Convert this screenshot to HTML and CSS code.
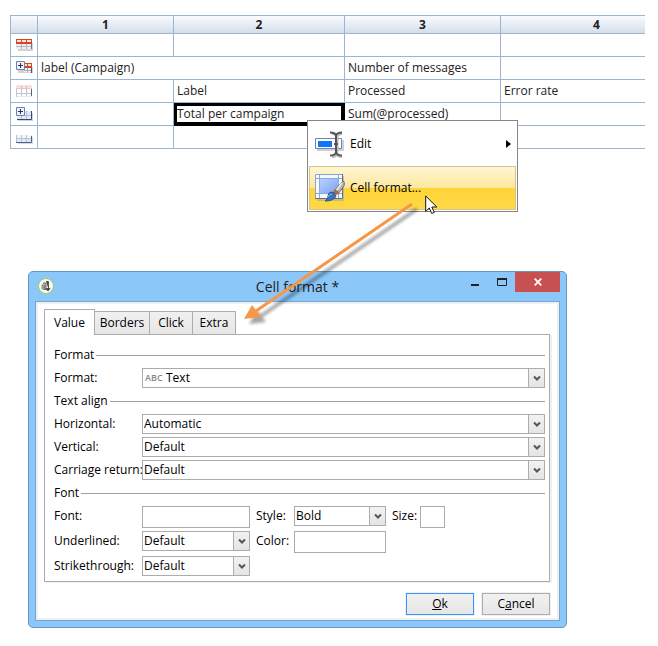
FILE: index.html
```html
<!DOCTYPE html>
<html lang="en">
<head>
<meta charset="utf-8">
<title>Cell format</title>
<link rel="stylesheet" href="styles.css">
</head>
<body>
<main class="page">
  <div class="sheet">
    <table class="grid">
      <colgroup><col class="c0"><col class="c1"><col class="c2"><col class="c3"><col></colgroup>
      <thead>
        <tr><th></th><th>1</th><th>2</th><th>3</th><th>4</th></tr>
      </thead>
      <tbody>
        <tr>
          <td class="mark"><svg width="18" height="12" viewBox="0 0 18 12"><path d="M2 4h15v8H2z" fill="#d2d3d8"/><path d="M0 5h16v5H0z" fill="#eeeef2"/><path d="M5.500 5v5M10.500 5v5M0 7.500h16" stroke="#b4b6c2" fill="none"/><path d="M15.500 5v5" stroke="#70768c"/><path d="M0 0h16v5H0z" fill="#d8451c"/><path d="M1 1h4v2H1zM6 1h4v2H6zM11 1h4v2h-4z" fill="#fde9e2"/></svg></td>
          <td></td><td></td><td></td><td></td>
        </tr>
        <tr>
          <td class="mark"><svg width="18" height="14" viewBox="0 0 18 14"><path d="M2 6h15v6H2z" fill="#d0d2d8"/><path d="M8 6h8v5H8z" fill="#f0f0f4"/><path d="M8 2h8v5H8z" fill="#d8451c"/><path d="M9 3h2v2H9zM12 3h3v2h-3z" fill="#fde9e2"/><path d="M11.500 7v4M8 9.500h8" stroke="#a9acb8"/><path d="M15.500 7v5" stroke="#46506e"/><path d="M.5 .5h8v8h-8z" fill="#eef2fa" stroke="#75819c"/><path d="M4.500 2v5M2 4.500h5" stroke="#223466"/></svg></td>
          <td colspan="2">label (Campaign)</td><td>Number of messages</td><td></td>
        </tr>
        <tr>
          <td class="mark"><svg width="18" height="13" viewBox="0 0 18 13"><path d="M0 0h16v3H0z" fill="#fbe3dc"/><path d="M0 3.500h16" stroke="#f0c5b9"/><path d="M5.500 1v11M10.500 1v11M0 8.500h16M.5 4v8" stroke="#c0c5d4"/><path d="M15.500 4v7" stroke="#53617f"/><path d="M1 11.500h15" stroke="#e6e9f0"/></svg></td>
          <td></td><td>Label</td><td>Processed</td><td>Error rate</td>
        </tr>
        <tr>
          <td class="mark"><svg width="18" height="14" viewBox="0 0 18 14"><path d="M2 6h15v8H2z" fill="#cfd3dc"/><path d="M1 4h15v8H1z" fill="#e1eafb"/><path d="M1 12.500h14.500V4" stroke="#35496f" fill="none"/><path d="M10.500 4v8M5.500 8v4M8 8.500h7" stroke="#b4bdd2"/><path d="M.5 .5h8v8h-8z" fill="#eef2fa" stroke="#75819c"/><path d="M4.500 2v5M2 4.500h5" stroke="#223466"/></svg></td>
          <td></td><td class="selected">Total per campaign</td><td>Sum(@processed)</td><td></td>
        </tr>
        <tr>
          <td class="mark"><svg width="18" height="16" viewBox="0 0 18 16"><path d="M2 8h15v7H2z" fill="#d8dae0"/><path d="M0 6h16v4H0z" fill="#f4f5f8"/><path d="M0 10h16v3H0z" fill="#dce7fa"/><path d="M5.500 6v7M10.500 6v7M0 9.500h16M.5 6v7" stroke="#bcc3d2"/><path d="M0 13.500h15.500V7" stroke="#4d6288" fill="none"/></svg></td>
          <td></td><td></td><td></td><td></td>
        </tr>
      </tbody>
    </table>
  </div>

  <menu class="menu">
    <li><button class="item" type="button">
      <svg width="32" height="32" viewBox="0 0 32 32"><path d="M3 12h27v11H3z" fill="#cfcfd4"/><path d="M1.500 10.500h26v10h-26z" fill="#fff" stroke="#7d7fae"/><path d="M4 13h14v6H4z" fill="#0a78f8"/><path d="M18 5.500q4 0 5 2.500 1-2.500 5-2.500M18 28.500q4 0 5-2.500 1 2.500 5 2.500M23 7v20" fill="none" stroke="#bbb" stroke-width="3"/><path d="M16 4.500q5 0 6 3 1-3 6-3M16 27.500q5 0 6-3 1 3 6 3M22 6v20M20 16h4" fill="none" stroke="#555" stroke-width="2"/></svg>
      <span>Edit</span>
      <svg class="more" width="5" height="8" viewBox="0 0 5 8"><path d="M0 0l5 4-5 4z"/></svg>
    </button></li>
    <li><button class="item active" type="button">
      <svg width="32" height="32" viewBox="0 0 32 32"><defs><linearGradient id="sheet" x1="0" y1="0" x2="1" y2="1"><stop offset="0" stop-color="#b9d0ff"/><stop offset="1" stop-color="#7fa3f4"/></linearGradient></defs><path d="M3 4h27v25H3z" fill="#b6a878" opacity=".6"/><path d="M1 2h28v25H1z" fill="#f4f8ff"/><path d="M1.500 27V2.500h27" fill="none" stroke="#8ba4cf"/><path d="M28.500 2v24.500H1" fill="none" stroke="#5570a0"/><path d="M6 7h18v14H6z" fill="url(#sheet)"/><path d="M5.500 3v23M24.500 3v23M2 6.500h26M2 21.500h26" stroke="#8ba9d8" fill="none"/><path d="M29 9q2 0 1 5l-6 8-4-3z" fill="#b5b3aa" stroke="#77736a"/><path d="M28 11l-6 8" stroke="#eee" stroke-width="1.500"/><path d="M21 17l4 3-2 3-4-3z" fill="#b9652e"/><path d="M17 20q4 0 5 4-2 5-11 5 4-3 3-5 0-3 3-4z" fill="#3c73bd" stroke="#2b568f"/><path d="M14 25q1-3 4-3" stroke="#8ab9ed" fill="none"/></svg>
      <span>Cell format...</span>
    </button></li>
  </menu>

  <section class="dialog">
    <header class="titlebar">
      <svg class="logo" width="16" height="16" viewBox="0 0 16 16"><circle cx="8" cy="8" r="7.500" fill="#f9fbf2" stroke="#a6cc58"/><path d="M3.500 7l2-2v7l-2-1z" fill="#999"/><path d="M5 5.500q3-2 3 1v5H6V7" fill="#aaa" stroke="#666"/><path d="M8 3.500h2.500V11M8 10.500h4l-2 2.500z" fill="#444" stroke="#444" stroke-width=".8"/></svg>
      <h1>Cell format *</h1>
      <div class="controls">
        <button type="button" aria-label="Minimize"><svg width="8" height="20" viewBox="0 0 8 20"><path d="M0 12h8v2H0z" fill="#222"/></svg></button>
        <button type="button" aria-label="Maximize"><svg width="10" height="20" viewBox="0 0 10 20"><path d="M.5 6.500h9v7h-9z" fill="none" stroke="#222"/><path d="M0 6h10v2H0z" fill="#222"/></svg></button>
        <button class="close" type="button" aria-label="Close"><svg width="8" height="8" viewBox="0 0 8 8"><path d="M.7 .7l6.600 6.600M7.300 .7L.7 7.300" stroke="#fff" stroke-width="1.800"/></svg></button>
      </div>
    </header>
    <form class="body">
      <div class="tabs" role="tablist">
        <button class="tab current" type="button" role="tab" aria-selected="true">Value</button>
        <button class="tab wide" type="button" role="tab">Borders</button>
        <button class="tab" type="button" role="tab">Click</button>
        <button class="tab" type="button" role="tab">Extra</button>
      </div>
      <div class="panel">
        <h2>Format</h2>
        <div class="fields">
          <label for="format">Format:</label>
          <span class="combo typed"><select id="format"><option>Text</option></select><span class="type">ABC</span><span class="drop"><svg width="8" height="7" viewBox="0 0 8 7"><path d="M1 1.500l3 3 3-3"/></svg></span></span>
        </div>
        <h2>Text align</h2>
        <div class="fields">
          <label for="horizontal">Horizontal:</label>
          <span class="combo"><select id="horizontal"><option>Automatic</option></select><span class="drop"><svg width="8" height="7" viewBox="0 0 8 7"><path d="M1 1.500l3 3 3-3"/></svg></span></span>
          <label for="vertical">Vertical:</label>
          <span class="combo"><select id="vertical"><option>Default</option></select><span class="drop"><svg width="8" height="7" viewBox="0 0 8 7"><path d="M1 1.500l3 3 3-3"/></svg></span></span>
          <label for="carriage">Carriage return:</label>
          <span class="combo"><select id="carriage"><option>Default</option></select><span class="drop"><svg width="8" height="7" viewBox="0 0 8 7"><path d="M1 1.500l3 3 3-3"/></svg></span></span>
        </div>
        <h2>Font</h2>
        <div class="font-fields">
          <label for="font">Font:</label>
          <input id="font" type="text">
          <label class="inner" for="style">Style:</label>
          <span class="combo"><select id="style"><option>Bold</option></select><span class="drop"><svg width="8" height="7" viewBox="0 0 8 7"><path d="M1 1.500l3 3 3-3"/></svg></span></span>
          <label class="inner" for="size">Size:</label>
          <input id="size" type="text">
          <label class="first" for="underlined">Underlined:</label>
          <span class="combo"><select id="underlined"><option>Default</option></select><span class="drop"><svg width="8" height="7" viewBox="0 0 8 7"><path d="M1 1.500l3 3 3-3"/></svg></span></span>
          <label class="inner" for="color">Color:</label>
          <input id="color" type="text">
          <label class="first" for="strike">Strikethrough:</label>
          <span class="combo"><select id="strike"><option>Default</option></select><span class="drop"><svg width="8" height="7" viewBox="0 0 8 7"><path d="M1 1.500l3 3 3-3"/></svg></span></span>
        </div>
      </div>
      <div class="actions">
        <button class="action primary" type="button"><u>O</u>k</button>
        <button class="action" type="button">C<u>a</u>ncel</button>
      </div>
    </form>
  </section>

  <svg class="pointer-arrow" width="200" height="136" viewBox="0 0 200 136">
    <defs><filter id="soft" x="-10%" y="-10%" width="120%" height="130%"><feGaussianBlur stdDeviation="1.500"/></filter></defs>
    <g filter="url(#soft)" opacity=".35" transform="translate(5 5)"><path d="M172 8L16 115" stroke="#000" stroke-width="3.500"/><path d="M4 123l8-14 9 12z"/></g>
    <path d="M172 8L16 115" stroke="#f79646" stroke-width="3"/>
    <path d="M4 123l8-14 9 12z" fill="#f79646"/>
  </svg>
  <svg class="cursor" width="13" height="20" viewBox="0 0 13 20"><path d="M.7 1v15.500l3.600-3.500 2.400 5.500 2.600-1.200-2.500-5.300h5z" fill="#fff" stroke="#111"/></svg>
</main>
</body>
</html>
```
FILE: styles.css
```css
* { box-sizing: border-box; }
body {
  margin: 0;
  background: #fff;
  color: #000;
  font: 12px/16px "Open Sans", "Noto Sans", sans-serif;
}
button, input, select { font: inherit; color: inherit; }
svg { display: block; flex: none; }

.page { position: relative; padding: 15px 0 18px; }

.sheet { margin: 0 13px 0 10px; overflow: hidden; }
.grid {
  width: calc(100% + 48px);
  border-collapse: separate;
  border-spacing: 0;
  table-layout: fixed;
  border-top: 1px solid #9cb6d2;
  border-left: 1px solid #9cb6d2;
  color: #222;
}
.c0 { width: 27px; }
.c1 { width: 136px; }
.c2 { width: 171px; }
.c3 { width: 156px; }
.grid th, .grid td {
  border-right: 1px solid #9cb6d2;
  border-bottom: 1px solid #9cb6d2;
}
.grid th {
  height: 18px;
  padding: 0;
  background: linear-gradient(#fafcfe, #d3deea);
  font-weight: 700;
}
.grid td { height: 23px; padding: 0 3px; white-space: nowrap; }
.grid .mark { padding: 0 0 0 5px; }
.grid .selected {
  border-right-color: #000;
  border-bottom-color: #000;
  box-shadow: inset 0 0 0 3px #000;
}

.menu {
  position: absolute;
  z-index: 1;
  left: 307px;
  top: 120px;
  width: 211px;
  margin: 0;
  padding: 1px;
  list-style: none;
  background: #fff;
  border: 1px solid #868686;
}
.item {
  display: flex;
  align-items: center;
  gap: 4px;
  width: 100%;
  height: 44px;
  padding: 0 4px;
  border: 1px solid transparent;
  background: none;
}
.more { margin-left: auto; }
.item.active {
  border-color: #d6c48a;
  background: linear-gradient(#fff6d4, #fce79c 50%, #ffd435 50%, #ffd849);
}

.dialog {
  margin: 122px 91px 0 28px;
  padding: 0 6px 6px;
  border: 1px solid #6597c2;
  border-radius: 5px;
  background: #8cc7fa;
}
.titlebar {
  display: grid;
  grid-template-columns: 1fr auto 1fr;
  height: 29px;
}
.logo { margin: 6px 0 0 3px; }
.titlebar h1 { margin: 4px 0 0; font-size: 14px; line-height: 21px; font-weight: 400; color: #222; }
.controls { display: flex; justify-content: flex-end; align-items: flex-start; gap: 18px; }
.controls button { display: flex; padding: 0; border: 0; background: none; }
.controls .close {
  width: 45px;
  height: 20px;
  margin-left: -10px;
  align-items: center;
  justify-content: center;
  background: #c75050;
}

.body {
  padding: 6px 9px 3px 8px;
  border: 1px solid #73a6d4;
  background: #fff;
  box-shadow: inset 0 0 0 2px #f0f0f0;
}
.tabs { display: flex; align-items: flex-end; height: 26px; padding-top: 2px; }
.tab {
  height: 23px;
  padding: 0;
  width: 43px;
  border: 1px solid #acacac;
  border-left-width: 0;
  border-bottom: 0;
  background: linear-gradient(#f1f1f1, #e6e6e6);
  line-height: 20px;
}
.tab.wide { width: 55px; }
.tab.current {
  position: relative;
  width: 51px;
  height: 26px;
  margin-bottom: -1px;
  border-left-width: 1px;
  background: #fff;
}
.panel {
  padding: 12px 4px 5px 9px;
  border: 1px solid #acacac;
  box-shadow: 2px 1px #f0f0f0;
}
.panel h2 {
  display: flex;
  align-items: center;
  gap: 2px;
  margin: 0 0 5px;
  font-size: 12px;
  line-height: 16px;
  font-weight: 400;
}
.panel h2::after { content: ""; flex: 1; height: 1px; background: #a0a0a0; }
.fields {
  display: grid;
  grid-template-columns: 88px 1fr;
  row-gap: 3px;
  margin-bottom: 5px;
}
label { line-height: 19px; white-space: nowrap; }
.combo { display: grid; height: 20px; }
.combo > * { grid-area: 1 / 1; }
select, input {
  width: 100%;
  min-width: 0;
  height: 20px;
  margin: 0;
  padding: 0 0 0 1px;
  border: 1px solid #acacac;
  border-radius: 0;
  background: #fff;
  appearance: none;
}
input { height: 22px; }
.typed select { padding-left: 23px; }
.type { padding-left: 3px; font-size: 9px; line-height: 20px; font-weight: 600; color: #888; pointer-events: none; }
.drop {
  display: grid;
  place-items: center;
  justify-self: end;
  width: 17px;
  height: 20px;
  border: 1px solid #acacac;
  background: linear-gradient(#f2f2f2, #e4e4e4);
  pointer-events: none;
}
.drop path { fill: none; stroke: #555; stroke-width: 2; }
.font-fields {
  display: grid;
  grid-template-columns: 88px 108px 44px 92px 34px 25px;
  grid-auto-rows: 20px;
  row-gap: 5px;
}
.font-fields .first { grid-column: 1; }
.font-fields .inner { padding-left: 6px; }

.actions { display: flex; justify-content: flex-end; gap: 8px; padding: 11px 0 2px; }
.action {
  width: 68px;
  height: 22px;
  padding: 0;
  border: 1px solid #acacac;
  background: linear-gradient(#f1f1f1, #e6e6e6);
  box-shadow: 0 0 0 1px #f0f0f0;
  line-height: 18px;
}
.action.primary { border-color: #3399ff; }

.pointer-arrow { position: absolute; z-index: 2; left: 240px; top: 196px; pointer-events: none; }
.cursor { position: absolute; z-index: 3; left: 425px; top: 195px; pointer-events: none; }
```
